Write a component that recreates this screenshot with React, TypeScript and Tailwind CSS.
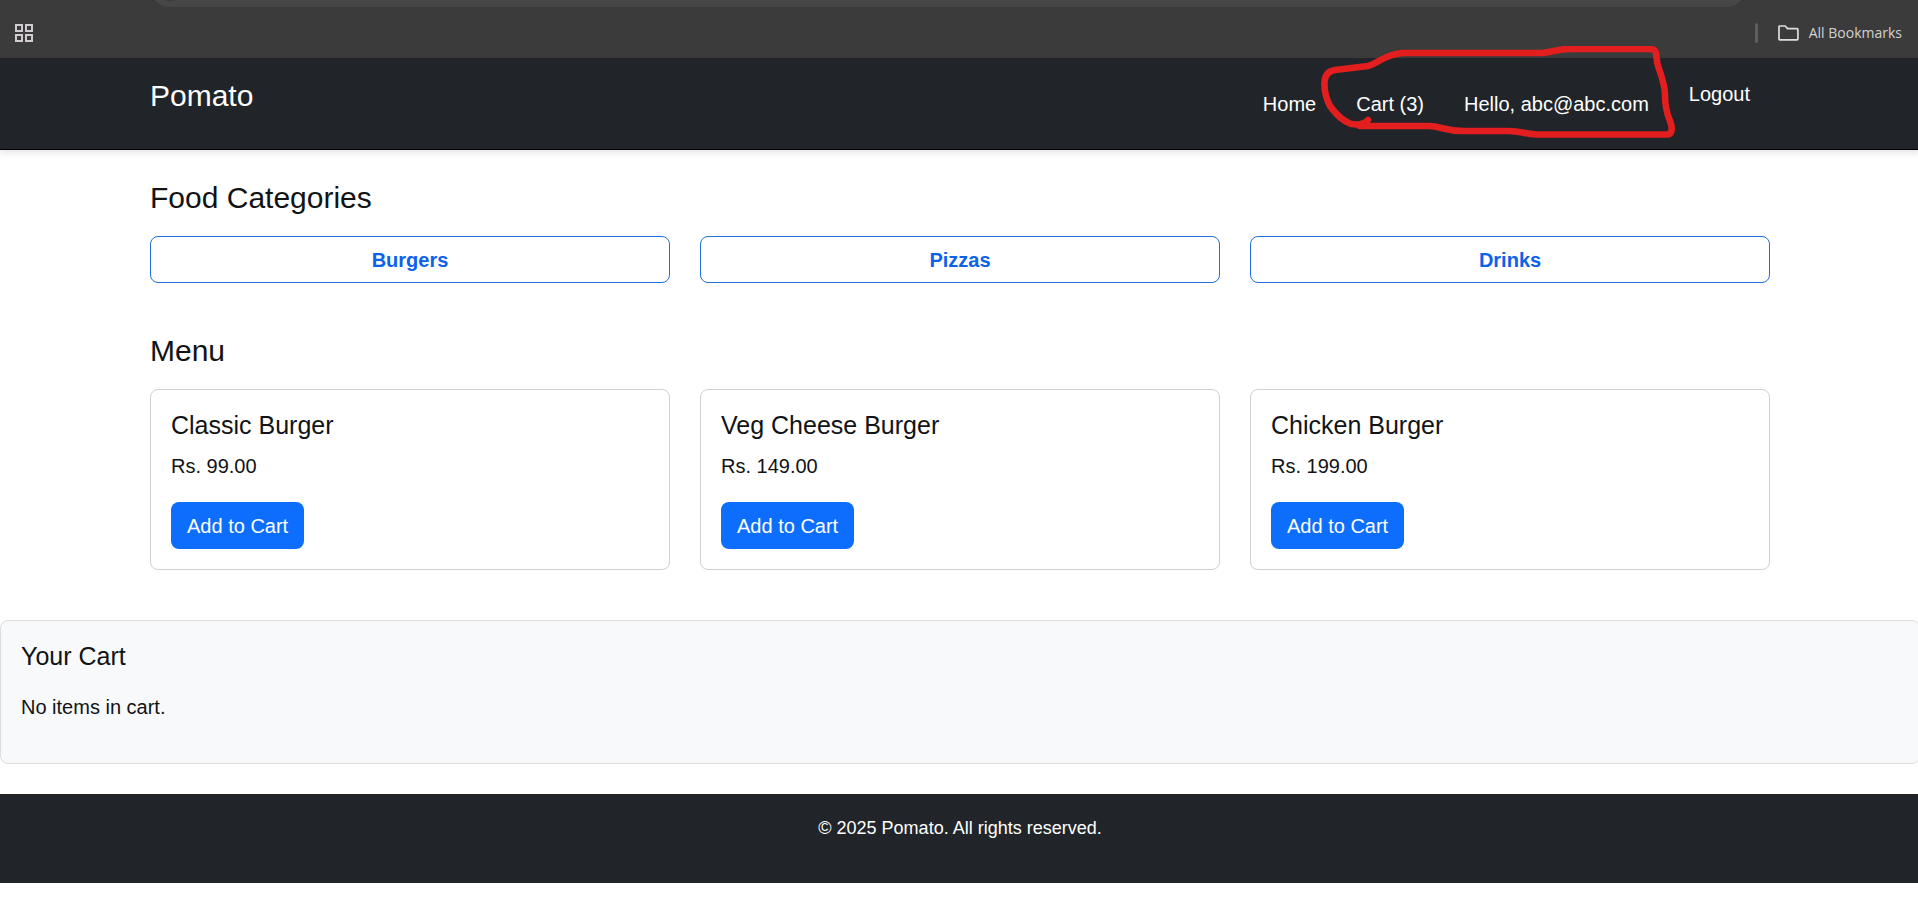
const categories = ["Burgers", "Pizzas", "Drinks"];

const menu = [
  { name: "Classic Burger", price: "Rs. 99.00" },
  { name: "Veg Cheese Burger", price: "Rs. 149.00" },
  { name: "Chicken Burger", price: "Rs. 199.00" },
];

function BrowserBar() {
  return (
    <div className="bg-[#3b3b3b] text-[#d2d2d2]">
      <div className="flex h-[7px] items-end overflow-hidden pr-[171px] pl-[149px]">
        <div className="flex h-[42px] flex-1 shrink-0 items-center rounded-full bg-[#474747] pl-1.5">
          <span className="size-[30px] rounded-full bg-[#3b3b3b]" />
        </div>
      </div>
      <div className="flex h-[51px] items-center justify-between pr-4 pl-[15px]">
        <button type="button" aria-label="Apps" className="cursor-pointer">
          <svg width="18" height="18" viewBox="0 0 18 18" fill="none" stroke="#cfcbce" strokeWidth="2">
            <rect x="1" y="1" width="6" height="6" />
            <rect x="11" y="1" width="6" height="6" />
            <rect x="1" y="11" width="6" height="6" />
            <rect x="11" y="11" width="6" height="6" />
          </svg>
        </button>
        <div className="flex items-center">
          <span className="mr-5 h-5 w-[3px] rounded-full bg-[#5e5e5e]" />
          <button
            type="button"
            className="flex cursor-pointer items-center gap-2.5 font-['Open_Sans',sans-serif] text-sm leading-5"
          >
            <svg width="21" height="16" viewBox="0 0 21 16" fill="none" stroke="#dedede" strokeWidth="1.7" strokeLinejoin="round">
              <path d="M1 1.9Q1 1 1.9 1H7.2L9.6 3.6H19Q19.9 3.6 19.9 4.5V14Q19.9 14.9 19 14.9H1.9Q1 14.9 1 14Z" />
            </svg>
            All Bookmarks
          </button>
        </div>
      </div>
    </div>
  );
}

function Annotation() {
  return (
    <svg
      className="pointer-events-none absolute -top-[12px] right-[90px]"
      width="360"
      height="96"
      viewBox="1320 46 360 96"
      fill="none"
      stroke="#e31e1e"
      strokeWidth="6.6"
      strokeLinecap="round"
      strokeLinejoin="round"
    >
      <path d="M1368 120C1365 124 1358 125 1351 124C1343 121 1335 113 1330 106C1326 98 1324 90 1324.500 82C1325 74 1329 71 1335 70L1368 66C1377 64 1385 54 1403 53H1542C1555 52 1557 49 1569 49H1650C1659 49 1655 57 1658 66C1661 75 1665 84 1665 95C1665 107 1667 114 1670 121C1673 129 1672 134.500 1667 134.500H1537C1523 134 1521 131 1509 131H1464C1443 131 1441 126 1429 126H1360" />
    </svg>
  );
}

function Header() {
  return (
    <header className="relative border-b border-black bg-[#212529] px-[15px] pt-[15px] pb-[14px] text-white shadow-[0_3px_6px_rgba(0,0,0,0.1)]">
      <div className="relative mx-auto flex max-w-[1620px] items-start justify-between">
        <a href="#home" className="text-3xl leading-[45px]">
          Pomato
        </a>
        <nav>
          <ul className="flex items-start gap-10 pr-5 text-xl leading-[30px]">
            <li className="py-4">
              <a href="#home">Home</a>
            </li>
            <li className="py-4">
              <a href="#cart">Cart (3)</a>
            </li>
            <li className="py-4">Hello, abc@abc.com</li>
            <li className="pt-1.5">
              <button type="button" className="cursor-pointer">
                Logout
              </button>
            </li>
          </ul>
        </nav>
        <div className="absolute top-[-15px] right-0">
          <Annotation />
        </div>
      </div>
    </header>
  );
}

export default function App() {
  return (
    <div className="min-h-screen overflow-hidden bg-white font-['Liberation_Sans',Arial,sans-serif] text-xl leading-[30px] text-[#111315]">
      <BrowserBar />
      <div className="-mr-0.5">
        <Header />
        <main>
          <div className="px-[15px]">
            <section className="mx-auto max-w-[1620px] pt-[30px]">
              <h2 className="mb-5 text-3xl leading-9">Food Categories</h2>
              <div className="grid grid-cols-3 gap-[30px]">
                {categories.map((category) => (
                  <button
                    key={category}
                    type="button"
                    className="h-[47px] cursor-pointer rounded-lg border border-[#1f6fdc] font-bold text-[#0d62ec]"
                  >
                    {category}
                  </button>
                ))}
              </div>
            </section>
            <section className="mx-auto max-w-[1620px] pt-[50px]">
              <h2 className="mb-5 text-3xl leading-9">Menu</h2>
              <div className="grid grid-cols-3 gap-[30px]">
                {menu.map((item) => (
                  <article key={item.name} className="rounded-lg border border-[#cfd0d1] p-5">
                    <h3 className="mb-[11px] text-[25px] leading-[30px]">{item.name}</h3>
                    <p className="mb-[21px]">{item.price}</p>
                    <button
                      type="button"
                      className="block h-[47px] cursor-pointer rounded-lg bg-[#0d6efd] px-4 text-white"
                    >
                      Add to Cart
                    </button>
                  </article>
                ))}
              </div>
            </section>
          </div>
          <section id="cart" className="mt-[50px] rounded-lg border border-[#dadcde] bg-[#f8f9fb] p-5">
            <h2 className="mb-[21px] text-[25px] leading-[30px]">Your Cart</h2>
            <p className="mb-[21px]">No items in cart.</p>
          </section>
        </main>
        <footer className="mt-[30px] bg-[#212529] px-5 pt-[21px] pb-5 text-center text-lg leading-[27px] text-white">
          <p className="mb-[21px]">© 2025 Pomato. All rights reserved.</p>
        </footer>
      </div>
    </div>
  );
}
